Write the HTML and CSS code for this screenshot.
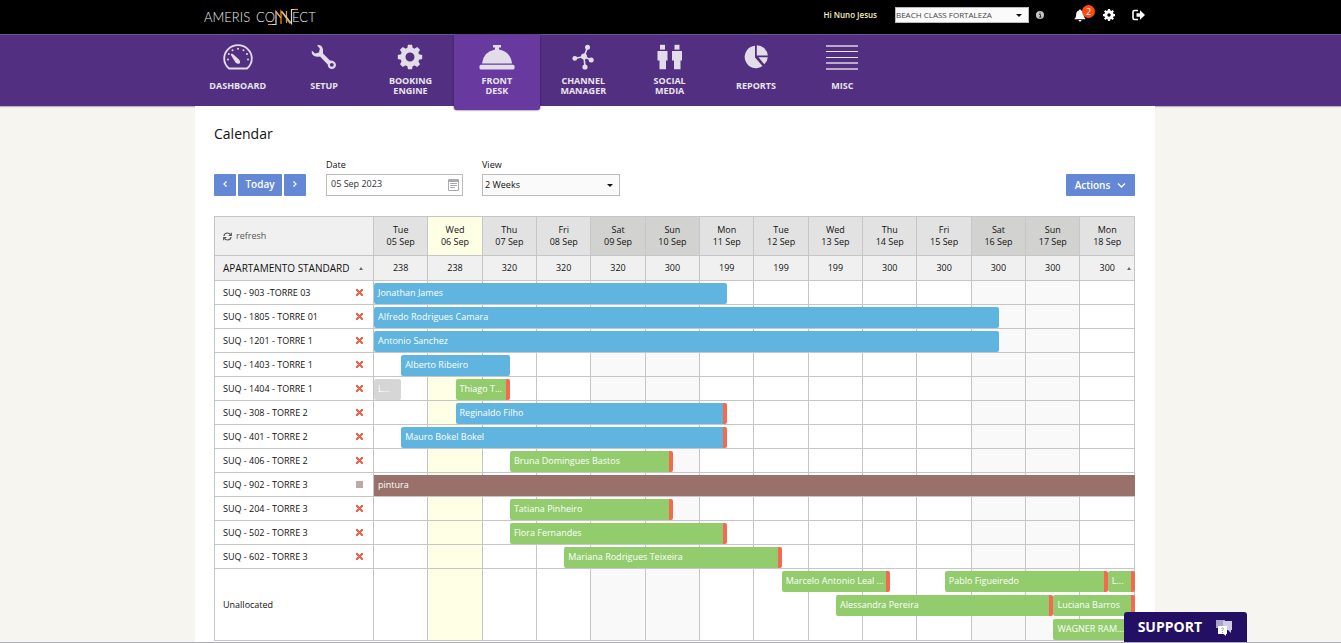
FILE: index.html
```html
<!DOCTYPE html>
<html lang="en">
<head>
<meta charset="utf-8">
<title>Calendar - Ameris Connect</title>
<link rel="stylesheet" href="styles.css">
</head>
<body>
<header class="topbar">
  <div class="wrap topbar-inner">
    <a class="logo" href="#" aria-label="Ameris Connect">
      <span>AMERIS</span>
      <span class="logo-co">CO</span>
      <svg class="logo-mark" width="30" height="18" viewBox="0 0 30 18" fill="none" stroke-width="1.2" aria-hidden="true">
        <path d="M4 16.5H8V3.500L13 10" stroke="#d8d8d8"/>
        <path d="M0 16.500H4M13 16V3L22 15.500M18.500 15V3M8 3.500L13 10" stroke="#f19a1f"/>
        <path d="M14 3.500L23.500 15.500V1.500H27" stroke="#d8d8d8"/>
        <path d="M26 1.500H30" stroke="#f19a1f"/>
      </svg>
      <span class="logo-ect">ECT</span>
    </a>
    <div class="account">
      <span class="greeting">Hi Nuno Jesus</span>
      <span class="select select-property">
        <select aria-label="Property"><option>BEACH CLASS FORTALEZA</option></select>
      </span>
      <svg class="info" width="8" height="8" viewBox="0 0 8 8" aria-hidden="true"><circle cx="4" cy="4" r="4" fill="#c4c4c4"/><path d="M3 3.500h1.500v2.500M3 6.200h2.500M3.500 1.900h1" stroke="#333" fill="none"/></svg>
      <button class="icon-btn bell" type="button" aria-label="Notifications">
        <svg width="12" height="13" viewBox="0 0 12 13" fill="#fff"><path d="M6 0.500C6.600.5 7 .9 7 1.500 9 2 9.800 3.500 9.800 5.200 9.800 7.500 10.500 9 11.800 10.300H.2C1.500 9 2.200 7.500 2.200 5.200 2.200 3.500 3 2 5 1.500 5 .9 5.400.5 6 .5zM4.500 11h3a1.500 1.500 0 0 1-3 0z"/></svg>
        <span class="badge">2</span>
      </button>
      <button class="icon-btn" type="button" aria-label="Settings">
        <svg width="12" height="12" viewBox="0 0 24 24" fill="none" stroke="#fff"><circle cx="12" cy="12" r="6.500" stroke-width="6"/><path d="M12 0v24M0 12h24M3.500 3.500l17 17M20.500 3.500l-17 17" stroke-width="4.500" stroke-dasharray="5 14 5"/></svg>
      </button>
      <button class="icon-btn" type="button" aria-label="Log out">
        <svg width="13" height="12" viewBox="0 0 13 12"><path d="M6 1.500H2.500Q1 1.500 1 3v6q0 1.500 1.500 1.500H6" fill="none" stroke="#fff" stroke-width="1.600"/><path d="M4.500 4.200H8V1.200L13 6 8 10.800V7.800H4.500z" fill="#fff"/></svg>
      </button>
    </div>
  </div>
</header>

<nav class="mainnav">
  <div class="wrap nav-inner">
    <a class="nav-item" href="#">
      <svg width="30" height="26" viewBox="0 0 30 26"><path d="M6 24.500Q1.200 20.500 1.200 14.500A13.800 13.300 0 0 1 28.800 14.500Q28.800 20.500 24 24.500z" fill="none" stroke="#e2dde9" stroke-width="1.800"/><path d="M8 10Q9 9 11 11L16 15.500Q18 18 16.500 19.500 14.500 20.500 12.500 18.500L8.500 12Q7.500 11 8 10z" fill="#e2dde9"/><g fill="#e2dde9"><circle cx="15" cy="4.800" r="1"/><circle cx="20.500" cy="6.300" r="1"/><circle cx="24" cy="10" r="1"/><circle cx="25" cy="15.500" r="1"/><circle cx="5" cy="15.500" r="1"/><circle cx="5.800" cy="10" r="1"/><circle cx="9.500" cy="6.300" r="1"/></g></svg>
      <span class="nav-label">Dashboard</span>
    </a>
    <a class="nav-item" href="#">
      <svg width="26" height="26" viewBox="0 0 26 26"><path d="M6 1.200Q11 .5 12 5.500L12 9.500 19 16.500Q24.500 16.500 25 21 24.500 25 20.500 25 17 24.500 16.700 20.500L9 12.500Q3 13.500.8 9.500V6.500L4 9.500 8 8.500 8.800 4.500z" fill="#e2dde9"/><circle cx="20.800" cy="20.800" r="1.900" fill="#522f80"/></svg>
      <span class="nav-label">Setup</span>
    </a>
    <a class="nav-item" href="#">
      <svg width="26" height="26" viewBox="0 0 26 26"><circle cx="13" cy="13" r="7" fill="none" stroke="#e2dde9" stroke-width="5"/><g fill="#e2dde9"><path id="tooth" d="M10 5L11 .8h4L16 5z"/><use href="#tooth" transform="rotate(45 13 13)"/><use href="#tooth" transform="rotate(90 13 13)"/><use href="#tooth" transform="rotate(135 13 13)"/><use href="#tooth" transform="rotate(180 13 13)"/><use href="#tooth" transform="rotate(225 13 13)"/><use href="#tooth" transform="rotate(270 13 13)"/><use href="#tooth" transform="rotate(315 13 13)"/></g></svg>
      <span class="nav-label">Booking<br>Engine</span>
    </a>
    <a class="nav-item active" href="#" aria-current="page">
      <svg width="36" height="26" viewBox="0 0 36 26" fill="#e2dde9"><path d="M14 1h8v2.500h-2V5.500Q31.500 7.500 33 19.500H3Q4.500 7.500 16 5.500V3.500h-2z"/><rect x="0.500" y="20.800" width="35" height="4.700" rx="1.500"/></svg>
      <span class="nav-label">Front<br>Desk</span>
    </a>
    <a class="nav-item" href="#">
      <svg width="22" height="26" viewBox="0 0 22 26"><path d="M12 12.500L15.500 3.500M12 12.500L2.500 14.500M12 12.500L19 16M12 12.500L13 23" stroke="#e2dde9" stroke-width="1.600"/><g fill="#e2dde9"><circle cx="12" cy="12.500" r="3"/><circle cx="15.500" cy="3.300" r="2.500"/><circle cx="2.800" cy="14.400" r="2.400"/><circle cx="19.200" cy="16" r="2.500"/><circle cx="13" cy="23" r="2.600"/></g></svg>
      <span class="nav-label">Channel<br>Manager</span>
    </a>
    <a class="nav-item" href="#">
      <svg width="26" height="26" viewBox="0 0 26 26" fill="#e2dde9"><g id="person"><path d="M3 .8h5v4.800H3z"/><path d="M.5 7h10v9.500H9V25.300H2.500V16.500H.5z"/></g><use href="#person" x="14.500"/></svg>
      <span class="nav-label">Social<br>Media</span>
    </a>
    <a class="nav-item" href="#">
      <svg width="24" height="26" viewBox="0 0 24 26" fill="#e2dde9"><path d="M11 1.800V13.500L18.500 22A11.200 11.200 0 1 1 11 1.800z"/><path d="M12.800 1.200A11.300 11.300 0 0 1 23.800 11.500H12.800z"/><path d="M14.500 13.200H23.800Q23.500 17.500 20.300 20.300z"/></svg>
      <span class="nav-label">Reports</span>
    </a>
    <a class="nav-item" href="#">
      <svg width="32" height="26" viewBox="0 0 32 26"><path d="M0 2h32M0 19h32M0 25h32" stroke="#b9aacb" stroke-width="2"/><path d="M0 7.500h32M0 13.500h32" stroke="#e8e3ee"/></svg>
      <span class="nav-label">Misc</span>
    </a>
  </div>
</nav>

<div class="content">
<main class="wrap page">
  <h1>Calendar</h1>
  <form class="toolbar">
    <div class="pager">
      <button class="btn btn-step" type="button" aria-label="Previous"><svg width="6" height="8" viewBox="0 0 6 8" fill="none" stroke="#fff" stroke-width="1.300"><path d="M4.500 1.500L2 4l2.500 2.500"/></svg></button>
      <button class="btn btn-today" type="button">Today</button>
      <button class="btn btn-step" type="button" aria-label="Next"><svg width="6" height="8" viewBox="0 0 6 8" fill="none" stroke="#fff" stroke-width="1.300"><path d="M1.500 1.500L4 4 1.500 6.500"/></svg></button>
    </div>
    <div class="field">
      <label for="date">Date</label>
      <span class="datebox">
        <input id="date" type="text" value="05 Sep 2023">
        <svg width="11" height="12" viewBox="0 0 11 12" fill="none" stroke="#a9a9b0"><path d="M.5.500h10v11H.5zM2 6.500h7M2 8.500h5M2 4.500h7"/><path d="M0 2h11" stroke-width="2"/></svg>
      </span>
    </div>
    <div class="field">
      <label for="view">View</label>
      <span class="select select-view"><select id="view"><option>2 Weeks</option></select></span>
    </div>
    <button class="btn btn-actions" type="button">Actions <svg width="9" height="7" viewBox="0 0 9 7" fill="none" stroke="#fff" stroke-width="1.300"><path d="M1 1.500l3.500 3.500L8 1.500"/></svg></button>
  </form>

  <table class="calendar">
    <colgroup>
      <col class="col-room"><col><col class="col-today"><col><col><col class="col-weekend"><col class="col-weekend"><col><col><col><col><col><col class="col-weekend"><col class="col-weekend"><col>
    </colgroup>
    <thead>
      <tr class="days">
        <th class="corner"><button class="refresh" type="button"><svg width="9" height="9" viewBox="0 0 9 9" fill="none" stroke="#555" stroke-width="1.200"><path d="M1 4Q1.300 1 4.500 1 6.500 1 7.700 3M8 5Q7.700 8 4.500 8 2.500 8 1.300 6"/><path d="M8.300.8V3.500H5.700M.7 8.200V5.500H3.300"/></svg> refresh</button></th>
        <th>Tue<br>05 Sep</th><th class="today">Wed<br>06 Sep</th><th>Thu<br>07 Sep</th><th>Fri<br>08 Sep</th><th class="weekend">Sat<br>09 Sep</th><th class="weekend">Sun<br>10 Sep</th><th>Mon<br>11 Sep</th><th>Tue<br>12 Sep</th><th>Wed<br>13 Sep</th><th>Thu<br>14 Sep</th><th>Fri<br>15 Sep</th><th class="weekend">Sat<br>16 Sep</th><th class="weekend">Sun<br>17 Sep</th><th>Mon<br>18 Sep</th>
      </tr>
      <tr class="rates">
        <th scope="row"><span class="room"><span>APARTAMENTO STANDARD</span><i class="up"></i></span></th>
        <td>238</td><td>238</td><td>320</td><td>320</td><td>320</td><td>300</td><td>199</td><td>199</td><td>199</td><td>300</td><td>300</td><td>300</td><td>300</td><td>300<i class="up up-last"></i></td>
      </tr>
    </thead>
    <tbody>
      <tr>
        <th scope="row"><span class="room">SUQ - 903 -TORRE 03<i class="cross"></i></span></th>
        <td><a class="bar blue" href="#" style="--start:0;--days:6.5">Jonathan James</a></td><td></td><td></td><td></td><td></td><td></td><td></td><td></td><td></td><td></td><td></td><td></td><td></td><td></td>
      </tr>
      <tr>
        <th scope="row"><span class="room">SUQ - 1805 - TORRE 01<i class="cross"></i></span></th>
        <td><a class="bar blue" href="#" style="--start:0;--days:11.5">Alfredo Rodrigues Camara</a></td><td></td><td></td><td></td><td></td><td></td><td></td><td></td><td></td><td></td><td></td><td></td><td></td><td></td>
      </tr>
      <tr>
        <th scope="row"><span class="room">SUQ - 1201 - TORRE 1<i class="cross"></i></span></th>
        <td><a class="bar blue" href="#" style="--start:0;--days:11.5">Antonio Sanchez</a></td><td></td><td></td><td></td><td></td><td></td><td></td><td></td><td></td><td></td><td></td><td></td><td></td><td></td>
      </tr>
      <tr>
        <th scope="row"><span class="room">SUQ - 1403 - TORRE 1<i class="cross"></i></span></th>
        <td><a class="bar blue" href="#" style="--start:0.5;--days:2">Alberto Ribeiro</a></td><td></td><td></td><td></td><td></td><td></td><td></td><td></td><td></td><td></td><td></td><td></td><td></td><td></td>
      </tr>
      <tr>
        <th scope="row"><span class="room">SUQ - 1404 - TORRE 1<i class="cross"></i></span></th>
        <td><a class="bar gray" href="#" style="--start:0;--days:0.5">L...</a></td><td><a class="bar green due" href="#" style="--start:1.5;--days:1">Thiago T...</a></td><td></td><td></td><td></td><td></td><td></td><td></td><td></td><td></td><td></td><td></td><td></td><td></td>
      </tr>
      <tr>
        <th scope="row"><span class="room">SUQ - 308 - TORRE 2<i class="cross"></i></span></th>
        <td></td><td><a class="bar blue due" href="#" style="--start:1.5;--days:5">Reginaldo Filho</a></td><td></td><td></td><td></td><td></td><td></td><td></td><td></td><td></td><td></td><td></td><td></td><td></td>
      </tr>
      <tr>
        <th scope="row"><span class="room">SUQ - 401 - TORRE 2<i class="cross"></i></span></th>
        <td><a class="bar blue due" href="#" style="--start:0.5;--days:6">Mauro Bokel Bokel</a></td><td></td><td></td><td></td><td></td><td></td><td></td><td></td><td></td><td></td><td></td><td></td><td></td><td></td>
      </tr>
      <tr>
        <th scope="row"><span class="room">SUQ - 406 - TORRE 2<i class="cross"></i></span></th>
        <td></td><td></td><td><a class="bar green due" href="#" style="--start:2.5;--days:3">Bruna Domingues Bastos</a></td><td></td><td></td><td></td><td></td><td></td><td></td><td></td><td></td><td></td><td></td><td></td>
      </tr>
      <tr>
        <th scope="row"><span class="room">SUQ - 902 - TORRE 3<i class="blocked"></i></span></th>
        <td><a class="bar brown" href="#" style="--start:0;--days:14">pintura</a></td><td></td><td></td><td></td><td></td><td></td><td></td><td></td><td></td><td></td><td></td><td></td><td></td><td></td>
      </tr>
      <tr>
        <th scope="row"><span class="room">SUQ - 204 - TORRE 3<i class="cross"></i></span></th>
        <td></td><td></td><td><a class="bar green due" href="#" style="--start:2.5;--days:3">Tatiana Pinheiro</a></td><td></td><td></td><td></td><td></td><td></td><td></td><td></td><td></td><td></td><td></td><td></td>
      </tr>
      <tr>
        <th scope="row"><span class="room">SUQ - 502 - TORRE 3<i class="cross"></i></span></th>
        <td></td><td></td><td><a class="bar green due" href="#" style="--start:2.5;--days:4">Flora Fernandes</a></td><td></td><td></td><td></td><td></td><td></td><td></td><td></td><td></td><td></td><td></td><td></td>
      </tr>
      <tr>
        <th scope="row"><span class="room">SUQ - 602 - TORRE 3<i class="cross"></i></span></th>
        <td></td><td></td><td></td><td><a class="bar green due" href="#" style="--start:3.5;--days:4">Mariana Rodrigues Teixeira</a></td><td></td><td></td><td></td><td></td><td></td><td></td><td></td><td></td><td></td><td></td>
      </tr>
      <tr class="unallocated">
        <th scope="row"><span class="room">Unallocated</span></th>
        <td></td><td></td><td></td><td></td><td></td><td></td><td></td><td><a class="bar green due" href="#" style="--start:7.5;--days:2">Marcelo Antonio Leal ...</a></td><td><a class="bar green due" href="#" style="--start:8.5;--days:4;--lane:1">Alessandra Pereira</a></td><td></td><td><a class="bar green due" href="#" style="--start:10.5;--days:3">Pablo Figueiredo</a></td><td></td><td><a class="bar green due" href="#" style="--start:12.5;--days:1.5;--lane:1">Luciana Barros</a><a class="bar green due" href="#" style="--start:12.5;--days:1.5;--lane:2">WAGNER RAM...</a></td><td><a class="bar green due" href="#" style="--start:13.5;--days:0.5">L...</a></td>
      </tr>
    </tbody>
  </table>
</main>
</div>

<button class="support" type="button">SUPPORT
  <svg width="18" height="17" viewBox="0 0 18 17"><path d="M1 1h9v8H5l-2 2.500V9H1z" fill="#aaa3c9"/><path d="M8 2h9v9h-1v3l-3-3H8z" fill="#cfcbe0"/><path d="M3 7h9v8h-1v2l-2.500-2H3z" fill="#fff"/><path d="M6.500 9.500q1-1 2 0 0 1-1 1.500v1M7.500 13v1" fill="none" stroke="#6fa6d6"/></svg>
</button>
</body>
</html>
```
FILE: styles.css
```css
* { box-sizing: border-box; }

body {
  margin: 0;
  min-height: 100vh;
  display: flex;
  flex-direction: column;
  background: #f6f5f0;
  border-bottom: 1px solid #adadb3;
  color: #111;
  font: 9px/12px "Open Sans", sans-serif;
}

button, input, select { font: inherit; color: inherit; }
button { border: 0; padding: 0; cursor: pointer; }
a { color: inherit; text-decoration: none; }
svg { display: block; flex: none; }

.wrap { width: 100%; max-width: 960px; margin: 0 auto; }
.topbar, .content { padding-left: 9px; }

/* Top bar */
.topbar { background: #000; color: #fff; }
.topbar-inner {
  display: flex;
  justify-content: space-between;
  align-items: center;
  height: 34px;
  padding: 0 10px 4px 9px;
}
.logo { display: flex; align-items: center; padding-top: 4px; font: 300 13px/18px Lato, sans-serif; color: #eee; }
.logo-co { margin-left: 6px; }
.logo-mark { margin-left: -7px; }
.logo-ect { margin-left: -6px; }
.account { display: flex; align-items: center; }
.greeting { font-weight: 600; font-size: 8px; color: #f5edc0; margin-right: 18px; }
.info { margin: 0 30px 0 7px; }
.icon-btn { position: relative; background: none; margin-right: 17px; }
.icon-btn:last-child { margin-right: 0; }
.badge {
  position: absolute;
  left: 8px;
  top: -4px;
  width: 13px;
  height: 13px;
  border-radius: 50%;
  background: #ff4a12;
  font-size: 9px;
  line-height: 13px;
  color: #fff;
}

/* Selects with a drawn arrow */
.select { position: relative; display: flex; }
.select select {
  appearance: none;
  width: 100%;
  margin: 0;
  border: 1px solid #bbb;
  border-radius: 0;
  background: #fafafa;
}
.select::after {
  content: "";
  position: absolute;
  right: 7px;
  top: 50%;
  margin-top: -1px;
  border: 3px solid transparent;
  border-top-color: #111;
  border-bottom: 0;
  pointer-events: none;
}
.select-property { width: 134px; height: 16px; }
.select-property select { padding: 0; font-size: 8px; color: #444; }
.select-view { width: 138px; height: 22px; }
.select-view select { padding: 0 2px; }

/* Main navigation */
.mainnav { padding-left: 8px; background: #522f80; border-top: 1px solid #6c5590; box-shadow: 0 1px 1px #bbb4c6; }
.nav-inner { display: flex; height: 71px; }
.nav-item {
  width: 9%;
  height: 71px;
  padding-top: 9px;
  display: flex;
  flex-direction: column;
  align-items: center;
  color: #e9e5ee;
  text-align: center;
  text-transform: uppercase;
}
.nav-label {
  display: flex;
  align-items: center;
  height: 20px;
  margin-top: 6px;
  font-weight: 700;
  font-size: 9px;
  line-height: 10px;
}
.nav-item.active {
  position: relative;
  z-index: 1;
  height: 75px;
  background: #683a9f;
  border-radius: 0 0 3px 3px;
  box-shadow: 0 0 2px #2c1450;
}

/* Page */
.content { flex: 1; display: flex; }
.page { background: #fff; padding: 18px 20px 0 19px; }
h1 { margin: 0 0 15px; font-size: 14px; line-height: 20px; font-weight: 400; }

.toolbar { display: flex; align-items: flex-end; gap: 20px; margin-bottom: 20px; }
.pager { display: flex; gap: 2px; }
.field { display: flex; flex-direction: column; gap: 3px; }
.field + .field { margin-left: -1px; }
.btn {
  display: flex;
  align-items: center;
  justify-content: center;
  height: 22px;
  border-radius: 1px;
  background: #6488d6;
  color: #fff;
  font-size: 10px;
  font-weight: 600;
}
.btn svg { margin-bottom: 2px; }
.btn-step { width: 22px; }
.btn-today { width: 44px; padding-bottom: 2px; }
.btn-actions { width: 69px; margin-left: auto; gap: 7px; }
.btn-actions svg { margin: 0; }

.datebox {
  display: flex;
  align-items: center;
  width: 137px;
  height: 22px;
  padding-right: 3px;
  border: 1px solid #bbb;
}
.datebox input { flex: 1; min-width: 0; border: 0; padding: 0 4px 2px; background: none; color: #333; }

/* Calendar */
.calendar {
  --room: 159px;
  width: 100%;
  table-layout: fixed;
  border-collapse: separate;
  border-spacing: 0;
  border: solid #c6c6c8;
  border-width: 1px 0 0 1px;
}
.col-room { width: 159px; }
.col-today { background: #ffffe6; }
.col-weekend { background: #f9f9f9; }
.calendar th, .calendar td {
  padding: 0;
  border: solid #c6c6c8;
  border-width: 0 1px 1px 0;
  font-weight: 400;
  text-align: center;
}
.calendar tr { position: relative; height: 24px; }
.calendar .days { height: 39px; }
.calendar .days th { background: #e2e2e2; }
.calendar .days .corner { background: #f0f0f0; text-align: left; }
.calendar .days .today { background: #ffffe6; }
.calendar .days .weekend { background: #d2d2d0; }
.calendar .rates { height: 25px; }
.calendar .rates th, .calendar .rates td { background: #f0f0f0; }
.calendar .rates th { font-size: 10px; font-weight: 500; }
.calendar .unallocated { height: 72px; }

.refresh { display: flex; align-items: center; gap: 4px; margin-left: 8px; background: none; color: #555; }
.room { display: flex; align-items: center; justify-content: space-between; padding: 0 10px 0 8px; white-space: nowrap; }

.up { border: 2px solid transparent; border-bottom: 3px solid #666; border-top: 0; }
.up-last { position: absolute; right: 4px; top: 11px; }
.blocked { width: 7px; height: 7px; background: #bda9a6; }
.cross {
  width: 7px;
  height: 7px;
  background:
    linear-gradient(45deg, transparent 36%, #ee6350 38% 62%, transparent 64%),
    linear-gradient(-45deg, transparent 36%, #ee6350 38% 62%, transparent 64%);
}

.bar {
  --lane: 0;
  --day: calc((100% - var(--room)) / 14);
  position: absolute;
  left: calc(var(--room) + var(--day) * var(--start));
  top: calc(2px + 24px * var(--lane));
  width: calc(var(--day) * var(--days));
  height: 21px;
  padding: 0 4px;
  border-radius: 2px;
  overflow: hidden;
  white-space: nowrap;
  text-align: left;
  line-height: 19px;
  color: #fff;
}
.blue { background: #5fb4e0; }
.green { background: #92cc6c; }
.gray { background: #d6d6d6; }
.brown { background: #99716a; border-radius: 0; }
.due { border-right: 4px solid #f4694f; }

.support {
  position: fixed;
  right: 94px;
  bottom: 1px;
  display: flex;
  align-items: center;
  gap: 13px;
  height: 30px;
  padding: 0 14px;
  border-radius: 3px 3px 0 0;
  background: #230f63;
  color: #fff;
  font-size: 14px;
  font-weight: 700;
}
```
